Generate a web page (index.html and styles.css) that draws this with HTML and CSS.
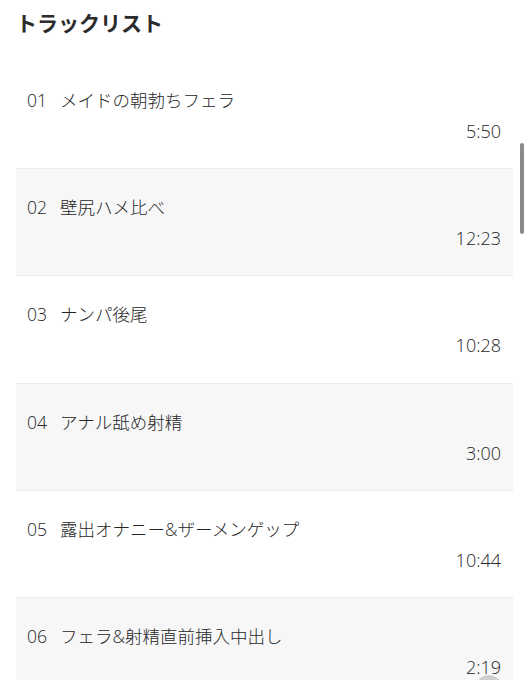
FILE: index.html
```html
<!DOCTYPE html>
<html lang="ja">
<head>
    <meta charset="UTF-8">
    <meta name="viewport" content="width=device-width, initial-scale=1.0">
    <title>トラックリスト</title>
    <link rel="stylesheet" href="styles.css">
</head>
<body>

    <div class="page">
        <h2 class="heading">トラックリスト</h2>

        <ul class="track-list">
            <li class="track">
                <div class="track-title"><span class="track-no">01</span>メイドの朝勃ちフェラ</div>
                <div class="track-time">5:50</div>
            </li>
            <li class="track">
                <div class="track-title"><span class="track-no">02</span>壁尻ハメ比べ</div>
                <div class="track-time">12:23</div>
            </li>
            <li class="track">
                <div class="track-title"><span class="track-no">03</span>ナンパ後尾</div>
                <div class="track-time">10:28</div>
            </li>
            <li class="track">
                <div class="track-title"><span class="track-no">04</span>アナル舐め射精</div>
                <div class="track-time">3:00</div>
            </li>
            <li class="track">
                <div class="track-title"><span class="track-no">05</span>露出オナニー&amp;ザーメンゲップ</div>
                <div class="track-time">10:44</div>
            </li>
            <li class="track">
                <div class="track-title"><span class="track-no">06</span>フェラ&amp;射精直前挿入中出し</div>
                <div class="track-time">2:19</div>
            </li>
        </ul>
    </div>

    <!-- overlay bits -->
    <div class="scroll-thumb"></div>
    <div class="to-top"></div>

</body>
</html>
```

FILE: styles.css
```css
body {
    margin: 0;
    background-color: #ffffff;
    color: #262626;
    font-family: "Open Sans", "Noto Sans CJK JP", sans-serif;
    overflow: hidden;
    height: 680px;
    position: relative;
}

.page {
    padding: 0 16px;
}

.heading {
    margin: 0;
    padding-top: 7px;
    height: 62px;
    box-sizing: border-box;
    font-family: "Noto Sans CJK JP", sans-serif;
    font-size: 21px;
    line-height: 30px;
    font-weight: 700;
    color: #2b2b2b;
}

.track-list {
    list-style: none;
    margin: 0;
    padding: 0;
}

.track {
    height: 107.2px;
    box-sizing: border-box;
    padding: 26px 12px 0 11px;
    border-bottom: 1px solid #ebebeb;
    background-color: #ffffff;
}

.track:nth-child(even) {
    background-color: #f7f7f7;
}

.track-title {
    font-size: 17.5px;
    line-height: 24px;
    font-weight: 300;
}

.track-no {
    display: inline-block;
    margin-right: 13px;
}

.track-time {
    margin-top: 7px;
    font-size: 18px;
    line-height: 24px;
    font-weight: 300;
    text-align: right;
}

/* Scroll bar thumb */
.scroll-thumb {
    position: absolute;
    top: 143px;
    left: 520px;
    width: 4px;
    height: 91px;
    border-radius: 2px;
    background-color: #8a8a8a;
}

/* Scroll to top button, mostly off screen */
.to-top {
    position: absolute;
    top: 675px;
    left: 476px;
    width: 26px;
    height: 26px;
    border-radius: 50%;
    background-color: #cfcfcf;
}
```
